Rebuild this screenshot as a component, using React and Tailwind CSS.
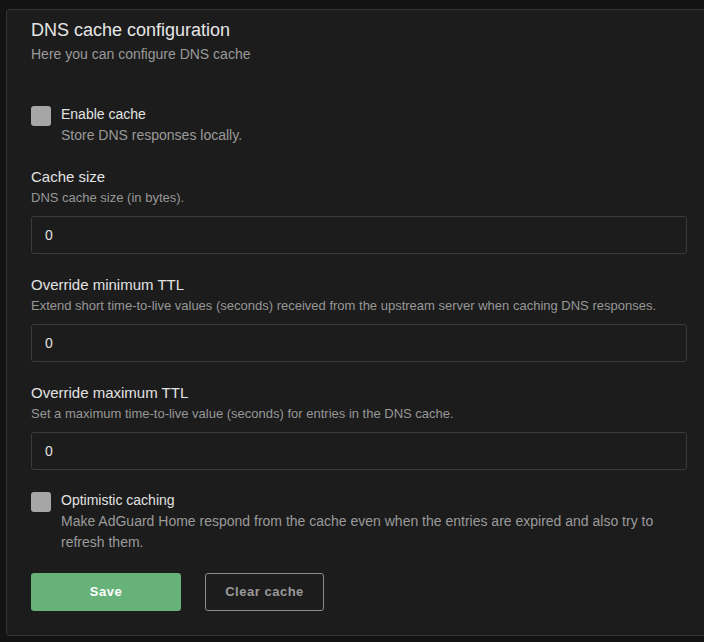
import React, { useState } from 'react'

const font = { fontFamily: '"Liberation Sans", Arial, sans-serif' }

function CheckRow({ label, desc, checked, onToggle, className }) {
  return (
    <label className={`flex items-start gap-[10px] cursor-pointer ${className}`}>
      <span
        onClick={onToggle}
        className={`mt-[2px] w-5 h-5 shrink-0 rounded-[3px] ${checked ? 'bg-[#67b279]' : 'bg-[#a6a6a6]'}`}
      />
      <span className="flex flex-col">
        <span className="text-[14px] leading-[21px] text-[#e2e2e2]">{label}</span>
        <span className="text-[14px] leading-[21px] text-[#9a9a9a]">{desc}</span>
      </span>
    </label>
  )
}

function Field({ label, desc, value, onChange, className = 'mb-[21px]' }) {
  return (
    <div className={className}>
      <div className="text-[15px] leading-[20px] text-[#e2e2e2]">{label}</div>
      <div className="mt-[2px] text-[13px] leading-[18px] text-[#979797]">{desc}</div>
      <input
        type="text"
        value={value}
        onChange={(e) => onChange(e.target.value)}
        className="mt-[9px] w-full h-[38px] px-[13px] rounded-[3px] bg-[#1c1c1c] border border-[#3a3a3a] text-[14px] text-[#e2e2e2] outline-none"
        style={font}
      />
    </div>
  )
}

export default function App() {
  const [enabled, setEnabled] = useState(false)
  const [optimistic, setOptimistic] = useState(false)
  const [size, setSize] = useState('0')
  const [minTtl, setMinTtl] = useState('0')
  const [maxTtl, setMaxTtl] = useState('0')

  return (
    <div className="min-h-screen w-full overflow-hidden bg-[#131313] pt-[9px]" style={font}>
      <div className="ml-[6px] w-[706px] bg-[#1c1c1c] border border-[#333333] rounded-[3px] px-[24px] pt-[8px] pb-[24px]">
        <h1 className="text-[18px] leading-[24px] text-[#e6e6e6]">DNS cache configuration</h1>
        <p className="mt-[2px] text-[14px] leading-[20px] text-[#9a9a9a]">Here you can configure DNS cache</p>

        <CheckRow
          className="mt-[40px] mb-[21px]"
          label="Enable cache"
          desc="Store DNS responses locally."
          checked={enabled}
          onToggle={() => setEnabled(!enabled)}
        />

        <Field label="Cache size" desc="DNS cache size (in bytes)." value={size} onChange={setSize} />
        <Field
          label="Override minimum TTL"
          desc="Extend short time-to-live values (seconds) received from the upstream server when caching DNS responses."
          value={minTtl}
          onChange={setMinTtl}
        />
        <Field
          className="mb-[20px]"
          label="Override maximum TTL"
          desc="Set a maximum time-to-live value (seconds) for entries in the DNS cache."
          value={maxTtl}
          onChange={setMaxTtl}
        />

        <CheckRow
          label="Optimistic caching"
          desc="Make AdGuard Home respond from the cache even when the entries are expired and also try to refresh them."
          checked={optimistic}
          onToggle={() => setOptimistic(!optimistic)}
        />

        <div className="mt-[20px] flex gap-[24px]">
          <button className="w-[150px] h-[38px] rounded-[3px] bg-[#67b279] text-white text-[13px] font-bold tracking-[0.04em]">
            Save
          </button>
          <button className="w-[119px] h-[38px] rounded-[3px] border border-[#8a8a8a] text-[#9a9a9a] text-[13px] font-bold tracking-[0.04em]">
            Clear cache
          </button>
        </div>
      </div>
    </div>
  )
}
